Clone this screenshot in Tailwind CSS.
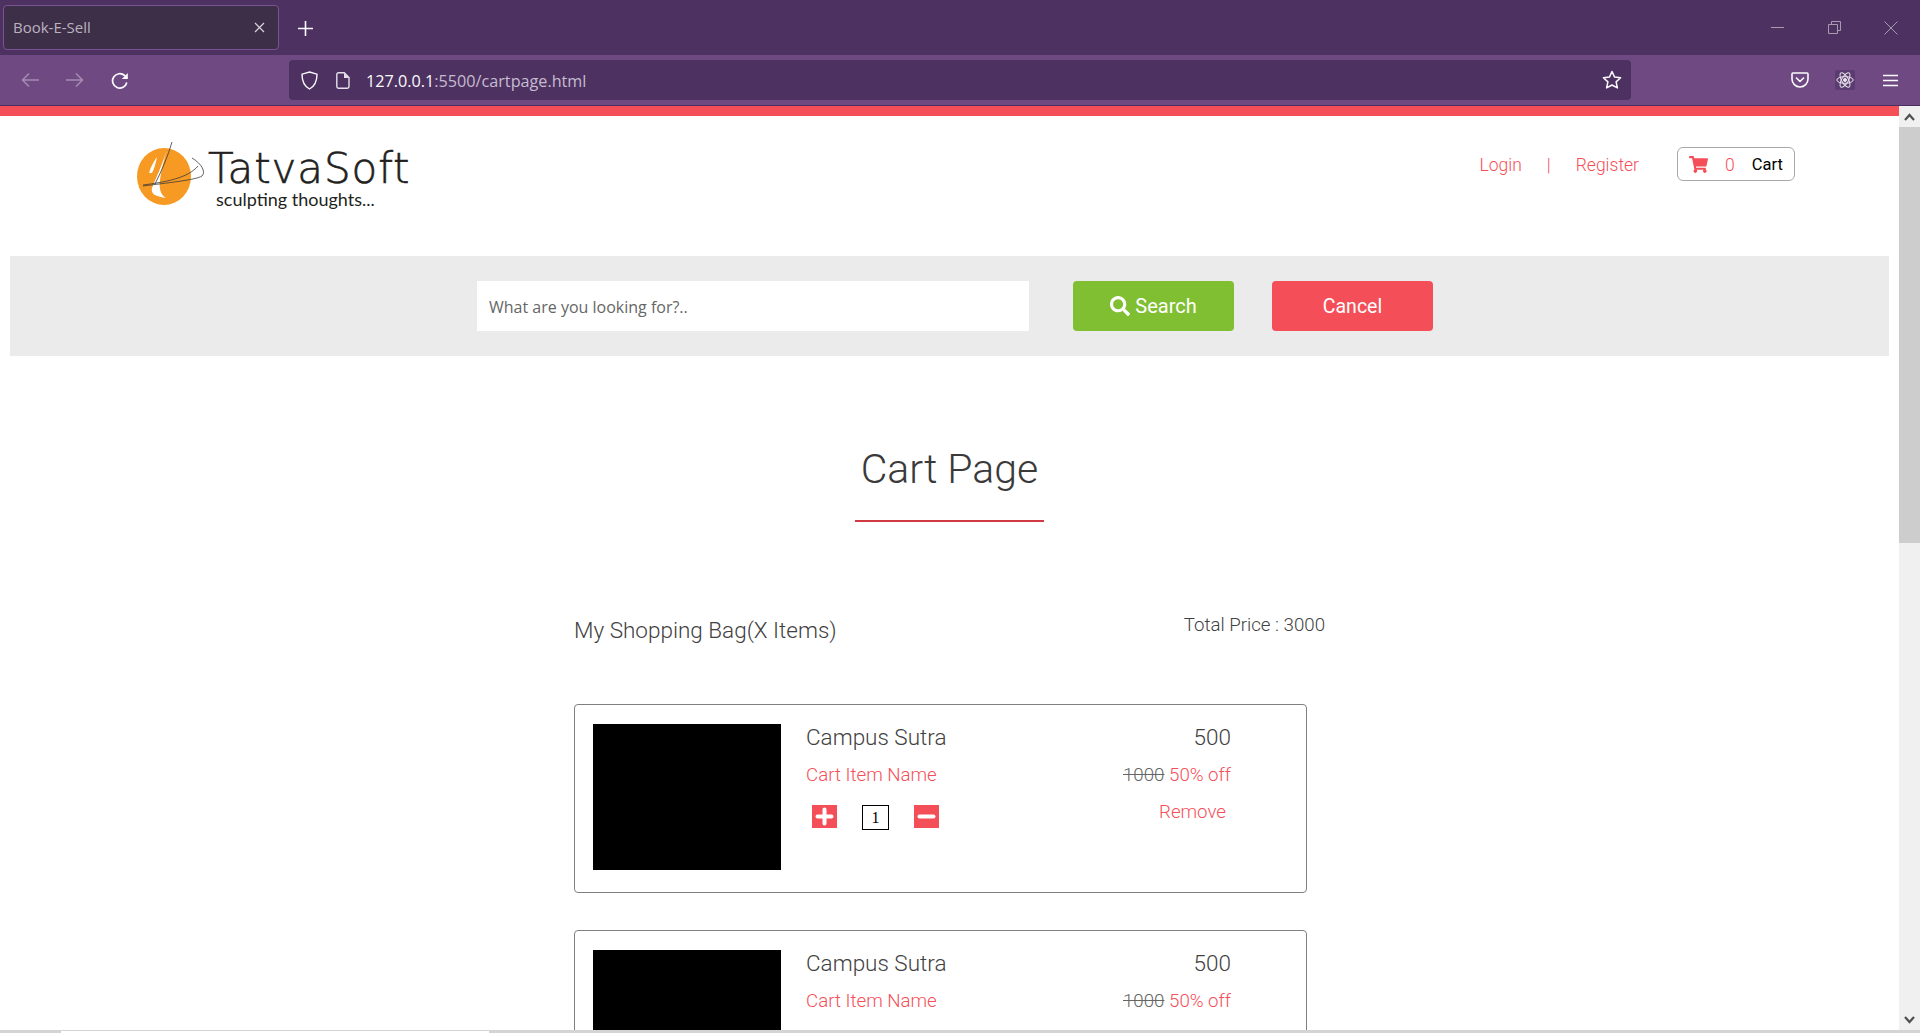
<!DOCTYPE html>
<html lang="en">
<head>
    <meta charset="UTF-8">
    <meta name="viewport" content="width=device-width, initial-scale=1.0">
    <title>Book-E-Sell</title>
    <script src="https://cdn.jsdelivr.net/npm/@tailwindcss/browser@4"></script>
</head>
<body class="h-[1033px] overflow-hidden flex flex-col bg-white font-['Roboto',sans-serif] font-light text-[#414141]">

    <!-- tab strip -->
    <div class="h-[55px] shrink-0 bg-[#4d3160] flex items-start font-['Open_Sans',sans-serif] font-normal">
        <div class="mt-[5px] ml-[3px] w-[276px] h-[45px] rounded-[4px] border border-[#7a5396] bg-[#3e2f48] flex items-center justify-between pl-[9px] pr-[13px]">
            <span class="text-[15px] text-[#b9b3c0]">Book-E-Sell</span>
            <svg class="w-[11px] h-[11px]" viewBox="0 0 11 11" fill="none" stroke="#d8d3dc" stroke-width="1.2"><path d="M1 1l9 9M10 1l-9 9"/></svg>
        </div>
        <svg class="mt-[21px] ml-[19px] w-[15px] h-[15px]" viewBox="0 0 15 15" fill="none" stroke="#fbfbfe" stroke-width="1.6"><path d="M7.5 0v15M0 7.5h15"/></svg>
        <div class="ml-auto mt-[21px] flex items-start">
            <svg class="w-[13px] h-[13px]" viewBox="0 0 13 13" fill="none" stroke="#a79bb0"><path d="M0 6.5h13"/></svg>
            <svg class="ml-[44px] w-[13px] h-[13px]" viewBox="0 0 13 13" fill="none" stroke="#a79bb0"><path d="M.5 3.5h9v9h-9zM3.5 3.5v-3h9v9h-3"/></svg>
            <svg class="ml-[43px] mr-[22px] w-[14px] h-[14px]" viewBox="0 0 14 14" fill="none" stroke="#a79bb0"><path d="M.5.5l13 13M13.5.5l-13 13"/></svg>
        </div>
    </div>

    <!-- toolbar -->
    <div class="h-[51px] shrink-0 bg-[#6f4a82] border-b border-[#4a2f5e] flex items-center font-['Open_Sans',sans-serif] font-normal">
        <svg class="ml-[21px] w-[18px] h-[16px]" viewBox="0 0 18 16" fill="none" stroke="#a48cb2" stroke-width="1.5"><path d="M18 8H1.5M8 1.5L1.5 8 8 14.5"/></svg>
        <svg class="ml-[27px] w-[18px] h-[16px]" viewBox="0 0 18 16" fill="none" stroke="#a48cb2" stroke-width="1.5"><path d="M0 8h16.5M10 1.5L16.5 8 10 14.5"/></svg>
        <svg class="ml-[27px] mt-[2px] w-[18px] h-[18px]" viewBox="0 0 18 18" fill="none" stroke="#fbfbfe" stroke-width="1.7"><path d="M15.8 10.5A7.2 7.2 0 1 1 13.6 3.5L16 6"/><path d="M16.8 1v6h-6" fill="#fbfbfe" stroke="none"/></svg>
        <div class="ml-[160px] w-[1342px] h-[40px] rounded-[4px] bg-[#4d3160] flex items-center">
            <svg class="ml-[12px] w-[17px] h-[19px]" viewBox="0 0 17 19" fill="none" stroke="#fbfbfe" stroke-width="1.4"><path d="M8.5 1L16 3.2c0 7-2 11.8-7.5 14.8C3 15 1 10.2 1 3.2z"/></svg>
            <svg class="ml-[18px] w-[14px] h-[17px]" viewBox="0 0 14 17" fill="none" stroke="#e6e0ea" stroke-width="1.4"><path d="M2.5.8h5.8L13 5.5v9a1.7 1.7 0 0 1-1.7 1.7H2.5A1.7 1.7 0 0 1 .8 14.5V2.5A1.7 1.7 0 0 1 2.5.8z"/><path d="M8 1v5h5" fill="#e6e0ea" stroke="none"/></svg>
            <span class="ml-[16px] mt-[2px] text-[16.2px] text-[#fbfbfe]">127.0.0.1<span class="text-[#c6bcd0]">:5500/cartpage.html</span></span>
            <svg class="ml-auto mr-[9px] w-[20px] h-[20px]" viewBox="0 0 20 20" fill="none" stroke="#fbfbfe" stroke-width="1.5" stroke-linejoin="round"><path d="M10 1.5l2.6 5.6 6 .7-4.5 4.1 1.3 6L10 15l-5.4 2.9 1.3-6L1.4 7.8l6-.7z"/></svg>
        </div>
        <div class="ml-auto flex items-center">
            <svg class="w-[18px] h-[16px]" viewBox="0 0 18 16" fill="none" stroke="#fbfbfe" stroke-width="1.6" stroke-linejoin="round"><path d="M2 1h14a1 1 0 0 1 1 1v5a8 8 0 0 1-16 0V2a1 1 0 0 1 1-1z"/><path d="M5.5 6L9 9.5 12.5 6" stroke-linecap="round"/></svg>
            <div class="ml-[26px] w-[20px] h-[20px] bg-[#5b3c70] rounded-[2px] flex items-center justify-center">
                <svg class="w-[18px] h-[18px]" viewBox="0 0 18 18" fill="none" stroke="#e9e4ed" stroke-width="1"><ellipse cx="9" cy="9" rx="8.2" ry="3.3"/><ellipse cx="9" cy="9" rx="8.2" ry="3.3" transform="rotate(60 9 9)"/><ellipse cx="9" cy="9" rx="8.2" ry="3.3" transform="rotate(120 9 9)"/><circle cx="9" cy="9" r="1.5" fill="#e9e4ed"/></svg>
            </div>
            <svg class="ml-[28px] mr-[22px] w-[15px] h-[13px]" viewBox="0 0 15 13" fill="none" stroke="#fbfbfe" stroke-width="1.6"><path d="M0 1.5h15M0 6.5h15M0 11.5h15"/></svg>
        </div>
    </div>

    <div class="flex-1 min-h-0 flex">
        <!-- page -->
        <main class="flex-1 min-w-0 overflow-hidden">
            <div class="h-[10px] bg-[#f44f59]"></div>

            <header class="h-[140px] flex items-start justify-between pl-[136px] pr-[104px]">
                <div class="flex mt-[24px] text-[#231f20]">
                    <svg class="w-[72px] h-[68px]" viewBox="0 0 72 68">
                        <ellipse cx="28" cy="36.5" rx="27" ry="28.5" fill="#f79a23"/>
                        <path d="M13 33C15 26 18 21 21 17C20 23 18 29 16 33zM31 10C26 25 20 38 16 48C15 53 17 56 30 58C24 54 23 48 24 40C25 30 28 20 31 10z" fill="#fff"/>
                        <path d="M36 2C32 16 26 30 19 44M56 18C66 24 70 32 66 36C60 40 30 43 7 46M7 45C30 42 52 38 62 26" fill="none" stroke="#3a3a3a" stroke-width="0.8"/>
                    </svg>
                    <div>
                        <div class="text-[42px] leading-[40px] mt-[9px] tracking-[0.9px] font-['DejaVu_Sans',sans-serif] font-extralight [-webkit-text-stroke:0.6px_#231f20]">TatvaSoft</div>
                        <div class="ml-[8px] text-[18px] leading-[20px] font-['Lato',sans-serif] font-normal">sculpting thoughts...</div>
                    </div>
                </div>
                <nav class="mt-[31px] h-[34px] flex items-center text-[17.5px] text-[#f44f59]">
                    <a href="#" class="mt-[2px]">Login</a>
                    <span class="ml-[25px] mt-[2px]">|</span>
                    <a href="#" class="ml-[25px] mt-[2px]">Register</a>
                    <button class="ml-[38px] w-[118px] h-[34px] rounded-[6px] border border-[#a8a8a8] flex items-center pl-[11px]">
                        <svg class="w-[19px] h-[17px]" viewBox="0 0 576 512" fill="#f44f59"><path d="M528.12 301.319l47.273-208C578.806 78.301 567.391 64 551.99 64H159.208l-9.166-44.81C147.758 8.021 137.93 0 126.529 0H24C10.745 0 0 10.745 0 24v16c0 13.255 10.745 24 24 24h69.883l70.248 343.435C147.325 417.1 136 435.222 136 456c0 30.928 25.072 56 56 56s56-25.072 56-56c0-15.674-6.447-29.835-16.824-40h209.647C430.447 426.165 424 440.326 424 456c0 30.928 25.072 56 56 56s56-25.072 56-56c0-22.172-12.888-41.332-31.579-50.405l5.517-24.276c3.413-15.018-8.002-29.319-23.403-29.319H218.117l-6.545-32h293.145c11.206 0 20.92-7.754 23.403-18.681z"/></svg>
                        <span class="ml-[17px] mt-[2px] text-[17.5px]">0</span>
                        <span class="ml-[17px] mt-[2px] text-[16.5px] font-normal text-black">Cart</span>
                    </button>
                </nav>
            </header>

            <!-- search band -->
            <section class="ml-[10px] mr-[10px] h-[100px] bg-[#ebebeb] flex items-center pl-[467px]">
                <input type="text" placeholder="What are you looking for?.." class="w-[552px] h-[50px] bg-white px-[12px] pt-[1px] text-[16px] font-['Open_Sans',sans-serif] font-normal placeholder:text-[#666] outline-none">
                <button class="ml-[44px] w-[161px] h-[50px] rounded-[4px] bg-[#80bf32] text-white text-[20px] font-normal flex items-center justify-center gap-[5px]">
                    <svg class="w-[20px] h-[20px]" viewBox="0 0 512 512" fill="#fff"><path d="M505 442.7L405.3 343c-4.5-4.5-10.6-7-17-7H372c27.6-35.3 44-79.7 44-128C416 93.1 322.9 0 208 0S0 93.1 0 208s93.1 208 208 208c48.3 0 92.7-16.4 128-44v16.3c0 6.4 2.5 12.5 7 17l99.7 99.7c9.4 9.4 24.6 9.4 33.9 0l28.3-28.3c9.4-9.4 9.4-24.6.1-34zM208 336c-70.7 0-128-57.2-128-128 0-70.7 57.2-128 128-128 70.7 0 128 57.2 128 128 0 70.7-57.2 128-128 128z"/></svg>
                    Search
                </button>
                <button class="ml-[38px] w-[161px] h-[50px] rounded-[4px] bg-[#f44f59] text-white text-[19.5px] font-normal pt-[1px]">Cancel</button>
            </section>

            <h1 class="mt-[89px] text-center text-[41px] leading-[48px] text-[#3a3a3a]">Cart Page</h1>
            <div class="mt-[27px] ml-[855px] w-[189px] h-[2px] bg-[#cf3a44]"></div>

            <section class="ml-[574px] w-[752px]">
                <div class="mt-[93px] h-[30px] flex items-start justify-between">
                    <h2 class="text-[22.5px] leading-[30px]">My Shopping Bag(X Items)</h2>
                    <p class="text-[18.7px] leading-[24px] -mt-[2px] mr-[1px]">Total Price : 3000</p>
                </div>

                <div class="mt-[59px] flex flex-col gap-[37px]">
                    <!-- item -->
                    <article class="w-[733px] h-[189px] rounded-[4px] border border-[#808080] flex pt-[19px] pl-[18px]">
                        <div class="w-[188px] h-[146px] bg-black"></div>
                        <div class="ml-[25px] w-[425px]">
                            <div class="mt-[1px] flex justify-between items-center h-[26px]">
                                <span class="text-[22.5px]">Campus Sutra</span>
                                <span class="text-[22.5px]">500</span>
                            </div>
                            <div class="mt-[12px] flex justify-between items-center h-[24px] text-[18.7px] text-[#f44f59]">
                                <span>Cart Item Name</span>
                                <span><s class="text-[#666]">1000</s> 50% off</span>
                            </div>
                            <div class="flex justify-between items-start">
                                <div class="mt-[18px] ml-[6px] flex items-start">
                                    <svg class="w-[25px] h-[23px]" viewBox="0 0 25 23"><rect width="25" height="23" fill="#f44f59"/><path d="M12.5 4.5v14M5.5 11.5h14" stroke="#fff" stroke-width="4" stroke-linecap="round"/></svg>
                                    <div class="ml-[25px] w-[27px] h-[25px] border border-black flex items-center justify-center text-[16px] text-black font-['Liberation_Serif',serif] font-normal">1</div>
                                    <svg class="ml-[25px] w-[25px] h-[23px]" viewBox="0 0 25 23"><rect width="25" height="23" fill="#f44f59"/><path d="M5.5 11.5h14" stroke="#fff" stroke-width="4" stroke-linecap="round"/></svg>
                                </div>
                                <a href="#" class="mt-[13px] mr-[5px] text-[18.7px] leading-[24px] text-[#f44f59]">Remove</a>
                            </div>
                        </div>
                    </article>

                    <article class="w-[733px] h-[189px] rounded-[4px] border border-[#808080] flex pt-[19px] pl-[18px]">
                        <div class="w-[188px] h-[146px] bg-black"></div>
                        <div class="ml-[25px] w-[425px]">
                            <div class="mt-[1px] flex justify-between items-center h-[26px]">
                                <span class="text-[22.5px]">Campus Sutra</span>
                                <span class="text-[22.5px]">500</span>
                            </div>
                            <div class="mt-[12px] flex justify-between items-center h-[24px] text-[18.7px] text-[#f44f59]">
                                <span>Cart Item Name</span>
                                <span><s class="text-[#666]">1000</s> 50% off</span>
                            </div>
                        </div>
                    </article>
                </div>
            </section>
        </main>

        <!-- scrollbar -->
        <div class="w-[21px] shrink-0 bg-[#f0f0f0] flex flex-col">
            <div class="h-[21px] flex items-center justify-center">
                <svg class="w-[11px] h-[8px]" viewBox="0 0 11 8" fill="none" stroke="#505050" stroke-width="2.2"><path d="M1 7l4.5-5L10 7"/></svg>
            </div>
            <div class="h-[416px] bg-[#cdcdcd]"></div>
            <div class="mt-auto h-[21px] flex items-center justify-center">
                <svg class="w-[11px] h-[8px]" viewBox="0 0 11 8" fill="none" stroke="#505050" stroke-width="2.2"><path d="M1 1l4.5 5L10 1"/></svg>
            </div>
        </div>
    </div>

    <!-- horizontal scrollbar, cut off by the window -->
    <div class="h-[3px] shrink-0 bg-[#d4d4d4] pt-[1px]">
        <div class="ml-[61px] w-[428px] h-[2px] bg-white"></div>
    </div>
</body>
</html>
